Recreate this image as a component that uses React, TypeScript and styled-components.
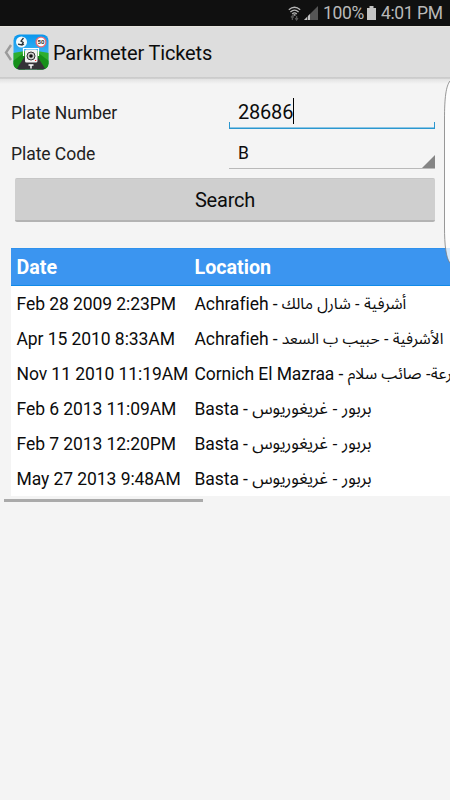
import React from "react";
import styled, { createGlobalStyle } from "styled-components";

const GlobalStyle = createGlobalStyle`
  * { box-sizing: border-box; }
  html, body { margin: 0; padding: 0; }
  body {
    width: 450px;
    height: 800px;
    overflow: hidden;
    background: #f4f4f4;
    font-family: Roboto, "DejaVu Sans", sans-serif;
    color: #0c0c0c;
  }
`;

const Screen = styled.div`
  position: relative;
  width: 450px;
  height: 800px;
  overflow: hidden;
  background: #f4f4f4;
`;

const StatusBar = styled.header`
  display: flex;
  align-items: center;
  justify-content: flex-end;
  height: 26px;
  padding-right: 8px;
  background: #101010;
  color: #b9b9b9;
  font-size: 17.5px;
  line-height: 26px;
`;

const BatteryLevel = styled.span`
  width: 41px;
  margin: 0 3px 0 5px;
  letter-spacing: -0.3px;
  white-space: nowrap;
`;

const Clock = styled.span`
  width: 61px;
  margin-left: 5px;
  letter-spacing: -0.4px;
  white-space: nowrap;
`;

const ActionBar = styled.nav`
  display: flex;
  align-items: center;
  height: 51px;
  padding-left: 4px;
  background: #dddddd;
  border-top: 1px solid #e8e5df;
`;

const AppIcon = styled.svg`
  display: block;
  margin-left: 1px;
`;

const Title = styled.h1`
  margin: 1px 0 0 4px;
  font-size: 20px;
  font-weight: 400;
  line-height: 24px;
  letter-spacing: -0.15px;
  white-space: nowrap;
`;

const BarShadow = styled.div`
  height: 7px;
  background: linear-gradient(#c9c9c9, #d2d2d2 28%, #e4e4e4 35%, #f4f4f4);
`;

const Form = styled.form`
  display: grid;
  grid-template-columns: 218px 207px;
  grid-template-rows: 46px 40px;
  padding: 0 0 0 11px;
  margin: 0;
`;

const Label = styled.label`
  font-size: 17.5px;
  line-height: 22px;
  padding-top: ${(p: { $top: number }) => p.$top}px;
  letter-spacing: -0.05px;
  color: #222;
`;

const NumberField = styled.div`
  position: relative;
  display: flex;
  align-items: center;
  height: 40px;
  margin-top: 6px;
  padding: 3px 0 0 9px;
  font-size: 20px;
  letter-spacing: -0.2px;

  &::after {
    content: "";
    position: absolute;
    left: 0;
    right: 1px;
    bottom: 1px;
    height: 6px;
    border: 1px solid #2b97cf;
    border-top: 0;
    box-shadow: inset 0 -1px 0 #8cc6e4;
  }
`;

const Caret = styled.span`
  width: 1px;
  height: 26px;
  margin-bottom: 2px;
  background: #000;
`;

const Spinner = styled.div`
  position: relative;
  height: 39px;
  width: 206px;
  padding: 12px 0 0 9px;
  border-bottom: 1px solid #b9b9b9;
  font-size: 17.5px;
  line-height: 22px;

  &::after {
    content: "";
    position: absolute;
    right: 0;
    bottom: 0;
    border-left: 13px solid transparent;
    border-bottom: 13px solid #858585;
  }
`;

const SearchButton = styled.button`
  display: block;
  width: 420px;
  height: 44px;
  margin: 8px 0 0 15px;
  padding: 0;
  border: 0;
  border-top: 1px solid #c6c6c6;
  border-bottom: 2px solid #b3b3b3;
  border-radius: 2px;
  background: #cfcfcf;
  color: #0c0c0c;
  font-family: inherit;
  font-size: 20px;
  letter-spacing: -0.2px;
`;

const TableView = styled.section`
  width: 439px;
  margin: 26px 0 0 11px;
  overflow: hidden;
  background: #fff;
`;

const Row = styled.div<{ $head?: boolean }>`
  display: grid;
  grid-template-columns: 178px 400px;
  height: ${(p) => (p.$head ? 38 : 35)}px;
  padding: ${(p) => (p.$head ? "2px 0 0 5.5px" : "0 0 0 5.5px")};
  align-items: center;
  background: ${(p) => (p.$head ? "#3b95f0" : "#fff")};
  border-top: ${(p) => (p.$head ? "1px solid #2e91ed" : "0")};
  border-bottom: ${(p) => (p.$head ? "1px solid #108ae8" : "0")};
  color: ${(p) => (p.$head ? "#fff" : "#0c0c0c")};
  font-size: ${(p) => (p.$head ? 19.7 : 17.5)}px;
  font-weight: ${(p) => (p.$head ? 700 : 400)};
  letter-spacing: ${(p) => (p.$head ? 0 : -0.07)}px;
  line-height: 22px;
  white-space: nowrap;
`;

const Cell = styled.span`
  display: flex;
  align-items: center;
  height: 22px;
  white-space: pre;
`;

const Arabic = styled.bdi<{ $size: number }>`
  font-family: "Noto Sans Arabic", "Noto Naskh Arabic", "DejaVu Sans", sans-serif;
  font-size: ${(p) => p.$size}px;
  letter-spacing: 0;
`;

const ScrollTrack = styled.div`
  width: 199px;
  height: 3px;
  margin: 3px 0 0 4px;
  background: #aaaaaa;
`;

const EdgePanel = styled.svg`
  position: absolute;
  left: 443px;
  top: 79px;
`;

const tickets = [
  { date: "Feb 28 2009 2:23PM", place: "Achrafieh", local: "أشرفية - شارل مالك", size: 15.7 },
  { date: "Apr 15 2010 8:33AM", place: "Achrafieh", local: "الأشرفية - حبيب ب السعد", size: 15.5 },
  { date: "Nov 11 2010 11:19AM", place: "Cornich El Mazraa", local: "كورنيش المزرعة- صائب سلام", size: 15.8 },
  { date: "Feb 6 2013 11:09AM", place: "Basta", local: "بربور - غريغوريوس", size: 16.9 },
  { date: "Feb 7 2013 12:20PM", place: "Basta", local: "بربور - غريغوريوس", size: 16.9 },
  { date: "May 27 2013 9:48AM", place: "Basta", local: "بربور - غريغوريوس", size: 16.9 },
];

function WifiIcon() {
  return (
    <svg width="13" height="15" viewBox="0 0 13 15" fill="none" stroke="#b5b5b5" strokeWidth="1.3">
      <path d="M.8 3.8Q6.5-1.3 12.2 3.8M2.4 6Q6.5 2.2 10.6 6M4.2 8Q6.5 5.8 8.8 8" />
      <path d="M6.5 8.2v1.5" strokeWidth="2" />
      <path d="M4.4 10v4M3 11.5l1.4-1.7 1.4 1.7M8.6 10v4M7.2 12.2l1.4 1.7 1.4-1.7" stroke="#555" />
    </svg>
  );
}

const Signal = styled.svg`
  margin-left: 3px;
`;

function SignalIcon() {
  return (
    <Signal width="14" height="14" viewBox="0 0 14 14">
      <path d="M0 14L14 0v14z" fill="#555" />
      <path d="M0 14l3-3v3zM4 14v-4l2-2v6z" fill="#c4c4c4" />
    </Signal>
  );
}

function BatteryIcon() {
  return (
    <svg width="9" height="14" viewBox="0 0 9 14">
      <path d="M0 2h2.5V0h4v2H9v12H0z" fill="#c4c4c4" />
    </svg>
  );
}

function ParkmeterIcon() {
  return (
    <AppIcon width="36" height="36" viewBox="0 0 36 36">
      <defs>
        <linearGradient id="sky" x2="0" y2="1">
          <stop stopColor="#0796ed" />
          <stop offset="1" stopColor="#68cafa" />
        </linearGradient>
        <clipPath id="tile"><rect x=".5" y=".5" width="35" height="35" rx="6" /></clipPath>
      </defs>
      <g clipPath="url(#tile)">
        <path d="M0 0h36v36H0z" fill="url(#sky)" />
        <path d="M0 19l12-2h12l12 2v17H0z" fill="#2eae2e" />
        <path d="M0 27l12-9v18H0zM36 27l-12-9v18h12z" fill="#16901a" />
        <path d="M12 22h12l9 14H3z" fill="#343438" />
        <circle cx="8.5" cy="8" r="5.5" fill="#f4fafc" />
        <path d="M10.5 4l-2.5 3 2.2 1.5-1.7 2.5M5 10.2l4 .8 2-1" fill="none" stroke="#28343c" strokeWidth="1.3" />
        <circle cx="28" cy="8" r="4.9" fill="#fff" stroke="#e66d78" strokeWidth="1.3" />
        <text x="28" y="10.2" textAnchor="middle" fontSize="6" fontWeight="700" fill="#333">50</text>
        <path d="M10.5 22v-7.5h15V22" fill="none" stroke="#fff" strokeWidth="1.2" />
        <rect x="12" y="15.5" width="12.5" height="13" rx="1.5" fill="#f2f2f2" />
        <circle cx="18" cy="22" r="4" fill="#ccc" stroke="#333" strokeWidth="1" />
        <circle cx="18" cy="22" r="1.8" fill="#111" />
        <path d="M22 26.5h1.2" stroke="#e22" strokeWidth="1.2" />
        <path d="M15.5 31h5M18 31v3.5" stroke="#fff" strokeWidth="1.5" />
      </g>
    </AppIcon>
  );
}

export default function App() {
  return (
    <Screen>
      <GlobalStyle />
      <StatusBar>
        <WifiIcon />
        <SignalIcon />
        <BatteryLevel>100%</BatteryLevel>
        <BatteryIcon />
        <Clock>4:01 PM</Clock>
      </StatusBar>
      <ActionBar>
        <svg width="8" height="17" viewBox="0 0 8 17" fill="none" stroke="#9b9b9b" strokeWidth="2.4">
          <path d="M7 1L2 8.5 7 16" />
        </svg>
        <ParkmeterIcon />
        <Title>Parkmeter Tickets</Title>
      </ActionBar>
      <BarShadow />
      <Form>
        <Label $top={18}>Plate Number</Label>
        <NumberField>28686<Caret /></NumberField>
        <Label $top={13}>Plate Code</Label>
        <Spinner>B</Spinner>
      </Form>
      <SearchButton type="button">Search</SearchButton>
      <TableView>
        <Row $head>
          <Cell>Date</Cell>
          <Cell>Location</Cell>
        </Row>
        {tickets.map((t) => (
          <Row key={t.date}>
            <Cell>{t.date}</Cell>
            <Cell>{t.place + " - "}<Arabic $size={t.size}>{t.local}</Arabic></Cell>
          </Row>
        ))}
      </TableView>
      <ScrollTrack />
      <EdgePanel width="7" height="188" viewBox="0 0 7 188">
        <path d="M7 2C3 7 1.5 19 1.5 40v108C1.5 166 3 179 7 184z" fill="#fff" fillOpacity=".78" />
        <path d="M7 2C3 7 1.5 19 1.5 40v108C1.5 166 3 179 7 184" fill="none" stroke="#777" strokeOpacity=".75" />
      </EdgePanel>
    </Screen>
  );
}
